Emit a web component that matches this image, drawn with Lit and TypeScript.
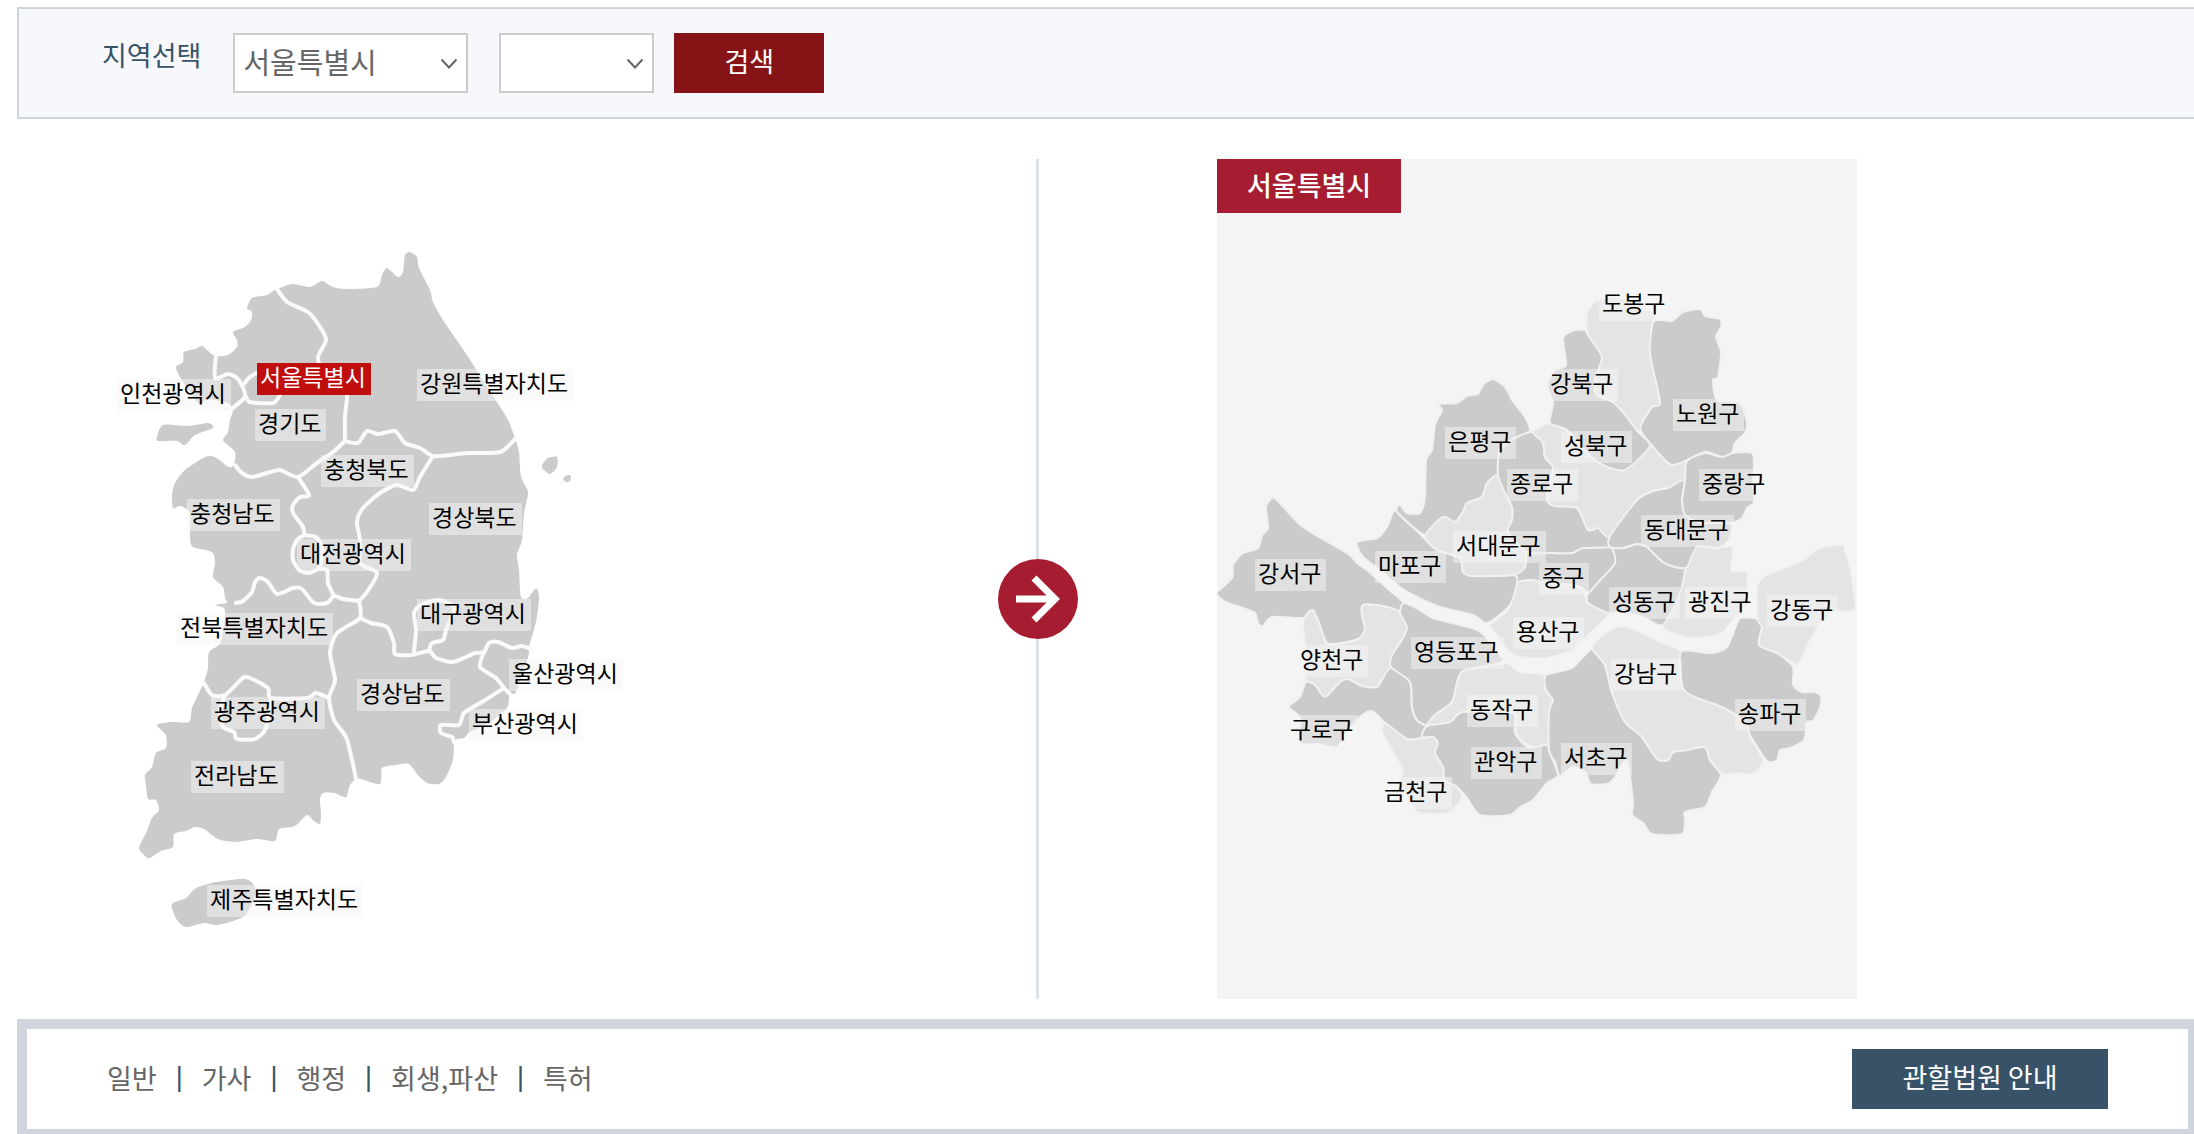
import { LitElement, html, svg, css } from "lit";
import { customElement, property } from "lit/decorators.js";

type Pin = { name: string; x: number; y: number; active?: boolean };
type Area = { tone: string; points: string };

const PROVINCES: Pin[] = [
  { name: "인천광역시", x: 117, y: 379 },
  { name: "서울특별시", x: 257, y: 363, active: true },
  { name: "강원특별자치도", x: 417, y: 369 },
  { name: "경기도", x: 255, y: 409 },
  { name: "충청북도", x: 321, y: 455 },
  { name: "충청남도", x: 187, y: 499 },
  { name: "경상북도", x: 429, y: 503 },
  { name: "대전광역시", x: 297, y: 539 },
  { name: "전북특별자치도", x: 177, y: 613 },
  { name: "대구광역시", x: 417, y: 599 },
  { name: "울산광역시", x: 509, y: 659 },
  { name: "경상남도", x: 357, y: 679 },
  { name: "부산광역시", x: 469, y: 709 },
  { name: "광주광역시", x: 211, y: 697 },
  { name: "전라남도", x: 191, y: 761 },
  { name: "제주특별자치도", x: 207, y: 885 },
];

const LAND: Area[] = [
  {
    tone: "dark",
    points:
      "405,255 410,252 417,257 419,268 430,290 433,302 443,320 467,355 487,387 497,402 508,420 515,438 519,452 521,477 528,492 524,513 522,540 517,555 519,570 521,597 528,598 534,590 537,589 539,597 537,617 533,633 529,647 528,658 516,692 511,693 509,698 507,708 489,723 470,732 464,738 457,739 454,743 453,760 446,777 439,784 427,783 418,775 409,764 396,765 382,768 380,784 361,779 356,779 350,785 346,797 334,793 323,793 320,800 321,813 320,824 314,821 307,815 295,826 279,829 275,841 257,839 236,842 218,839 204,829 195,827 186,831 174,834 173,847 161,851 150,858 145,856 139,848 146,833 152,818 159,810 156,800 148,799 146,785 145,775 152,767 156,753 166,748 166,735 157,725 171,722 189,722 192,708 198,695 204,682 208,668 209,652 221,642 225,610 215,605 227,603 225,598 223,587 213,577 215,563 212,552 193,547 190,537 190,513 180,506 173,508 172,495 175,483 185,470 205,457 215,457 227,466 232,467 235,460 235,452 228,445 223,440 228,432 230,420 233,410 228,403 207,399 200,405 190,392 180,377 176,367 183,362 184,352 195,349 202,346 207,350 215,356 228,355 237,347 237,340 233,332 245,327 251,320 252,312 247,308 252,298 267,295 275,290 292,284 310,287 322,281 333,287 347,289 377,287 382,275 387,268 398,277 403,272",
  },
  { tone: "dark", points: "157,437 163,425 187,426 208,423 213,428 195,435 185,445 177,441 158,441" },
  { tone: "dark", points: "542,465 548,458 557,457 557,467 550,474 543,469" },
  { tone: "dark", points: "563,479 567,475 571,476 570,481 566,482" },
  {
    tone: "dark",
    points:
      "172,908 173,903 186,898 196,888 216,882 245,879 255,887 253,902 243,917 218,925 204,923 186,927 177,920",
  },
];

const LAND_BORDERS = [
  "277,289 287,302 308,312 320,327 326,340 318,357 323,370 345,385 347,397 345,417 345,441",
  "216,355 215,378 228,374 237,378 243,388 245,397 233,408",
  "243,385 250,377 257,373 270,368",
  "245,395 250,402 273,403 280,395",
  "345,441 333,452 317,463 298,477 280,470 267,473 252,477 242,473 235,465",
  "345,441 358,443 367,431 378,434 395,431 405,443 420,448 433,456 450,455 467,453 500,452 515,439",
  "433,456 420,477 413,490 397,485 380,493 363,508 357,522 360,540 360,563 377,573 367,592 359,601",
  "298,477 309,495 300,497 293,505 293,513 303,527 304,535",
  "304,535 297,540 293,549 293,560 299,570 308,573 318,569 322,558 322,547 316,537 304,535",
  "318,569 327,570 328,583 334,596",
  "236,603 243,601 252,592 255,582 260,578 268,582 277,594 293,588 302,589 314,603 327,603 334,596 343,599 359,601",
  "359,601 360,618 337,633 330,653 335,680 329,698 334,720 346,737 352,760 356,779",
  "360,618 371,623 387,627 394,643 395,654 411,655 429,651 436,658 452,662 464,658 475,653 484,652 489,643 498,642 512,648 521,646 529,648",
  "414,652 416,630 414,613 421,605 439,600 454,608 446,630 443,640 432,643 429,651",
  "484,652 480,667 496,678 504,688 511,695",
  "504,688 482,702 464,713 459,725 441,725 441,733 452,737 454,742",
  "204,683 212,695 225,695 243,678 250,678 268,688 271,698 307,698 316,693 329,698",
  "225,695 220,710 223,727 234,732 237,739 255,739 266,728 271,698",
];

const DISTRICTS: Pin[] = [
  { name: "도봉구", x: 1599, y: 289 },
  { name: "강북구", x: 1547, y: 369 },
  { name: "노원구", x: 1673, y: 399 },
  { name: "성북구", x: 1561, y: 431 },
  { name: "은평구", x: 1445, y: 427 },
  { name: "종로구", x: 1507, y: 469 },
  { name: "중랑구", x: 1699, y: 469 },
  { name: "동대문구", x: 1641, y: 515 },
  { name: "서대문구", x: 1453, y: 531 },
  { name: "중구", x: 1539, y: 563 },
  { name: "마포구", x: 1375, y: 551 },
  { name: "강서구", x: 1255, y: 559 },
  { name: "성동구", x: 1609, y: 587 },
  { name: "광진구", x: 1685, y: 587 },
  { name: "강동구", x: 1767, y: 595 },
  { name: "용산구", x: 1513, y: 617 },
  { name: "영등포구", x: 1411, y: 637 },
  { name: "양천구", x: 1297, y: 645 },
  { name: "강남구", x: 1611, y: 659 },
  { name: "동작구", x: 1467, y: 695 },
  { name: "구로구", x: 1287, y: 715 },
  { name: "관악구", x: 1471, y: 747 },
  { name: "서초구", x: 1561, y: 743 },
  { name: "송파구", x: 1735, y: 699 },
  { name: "금천구", x: 1381, y: 777 },
];

const CITY: Area[] = [
  // 강서구
  { tone: "dark", points: "1272,498 1277,500 1303,527 1347,553 1357,563 1367,570 1387,588 1404,603 1400,612 1382,606 1363,605 1362,615 1365,628 1360,638 1342,643 1327,643 1320,627 1313,610 1303,618 1272,617 1263,626 1258,623 1255,613 1243,608 1225,602 1217,595 1217,592 1232,578 1233,565 1243,553 1258,548 1262,535 1268,528 1266,507" },
  // 양천구
  { tone: "light", points: "1312,610 1320,625 1327,644 1343,643 1360,638 1365,628 1362,615 1363,605 1382,606 1400,612 1407,628 1400,643 1392,655 1391,667 1383,678 1377,687 1362,686 1348,679 1340,682 1325,697 1315,685 1306,680 1306,650 1303,622" },
  // 구로구
  { tone: "dark", points: "1306,682 1315,685 1325,697 1340,682 1348,679 1362,686 1377,687 1383,678 1391,668 1410,682 1412,707 1417,720 1427,727 1422,739 1407,739 1385,723 1372,711 1360,717 1345,735 1337,747 1317,744 1300,743 1300,718 1289,707 1300,697" },
  // 금천구
  { tone: "light", points: "1385,723 1407,739 1422,738 1433,737 1438,743 1435,753 1443,767 1445,780 1457,787 1462,797 1448,813 1420,813 1413,807 1400,780 1403,770 1390,747 1382,732" },
  // 영등포구
  { tone: "dark", points: "1404,603 1420,610 1433,618 1477,630 1490,642 1503,660 1490,667 1463,671 1457,683 1452,702 1435,715 1427,725 1417,720 1412,707 1410,682 1391,667 1392,655 1400,643 1407,628 1400,613" },
  // 동작구
  { tone: "light", points: "1463,671 1493,665 1507,663 1520,672 1546,675 1546,690 1553,700 1549,712 1549,745 1530,746 1517,735 1515,720 1513,713 1463,712 1450,722 1427,726 1435,715 1452,702 1457,683" },
  // 관악구
  { tone: "dark", points: "1427,726 1450,722 1463,712 1513,713 1515,733 1528,747 1547,745 1550,753 1558,775 1547,783 1533,800 1520,807 1510,815 1480,815 1467,798 1457,787 1445,780 1443,767 1435,753 1438,743 1433,737 1422,737" },
  // 서초구
  { tone: "dark", points: "1546,675 1572,668 1592,649 1605,665 1612,693 1625,722 1642,737 1657,759 1668,760 1673,752 1687,750 1705,747 1710,760 1721,775 1712,792 1705,807 1685,812 1685,820 1682,834 1652,834 1643,823 1632,815 1633,803 1628,763 1623,763 1615,777 1607,784 1591,784 1585,772 1573,767 1560,776 1555,762 1549,750 1549,712 1553,700 1546,690" },
  // 강남구
  { tone: "light", points: "1592,648 1603,635 1617,627 1630,628 1660,642 1681,652 1683,688 1697,698 1717,705 1733,713 1747,725 1750,737 1763,760 1753,774 1738,773 1723,774 1710,760 1705,747 1687,750 1673,752 1668,760 1657,759 1642,737 1625,722 1612,693 1605,665" },
  // 송파구
  { tone: "dark", points: "1681,652 1710,653 1727,647 1740,618 1757,619 1762,627 1759,645 1777,653 1793,667 1793,685 1802,692 1815,692 1821,697 1820,708 1813,721 1807,722 1804,740 1790,748 1780,750 1777,760 1767,761 1750,735 1747,725 1733,713 1717,705 1697,698 1683,688" },
  // 강동구
  { tone: "light", points: "1843,545 1845,552 1850,567 1854,593 1855,610 1832,612 1820,625 1810,640 1800,662 1795,664 1777,653 1759,645 1762,627 1758,620 1757,587 1767,575 1800,562 1820,548" },
  // 광진구
  { tone: "light", points: "1697,547 1717,548 1733,547 1731,570 1747,572 1747,593 1743,613 1733,620 1723,632 1707,637 1687,637 1663,627 1678,597 1685,567" },
  // 성동구
  { tone: "dark", points: "1610,546 1623,548 1637,544 1647,547 1663,562 1675,567 1685,567 1680,593 1663,625 1643,617 1623,612 1607,613 1588,604 1588,593 1600,580 1615,563" },
  // 중구
  { tone: "dark", points: "1527,552 1550,553 1572,553 1583,548 1610,547 1615,563 1600,580 1588,593 1580,587 1543,582 1530,580 1518,582 1515,575 1525,567" },
  // 용산구
  { tone: "light", points: "1530,580 1543,582 1580,587 1588,603 1607,613 1607,617 1590,633 1573,650 1547,658 1520,657 1507,650 1495,633 1490,625 1508,610 1515,588 1518,582" },
  // 마포구
  { tone: "dark", points: "1357,542 1377,538 1387,527 1393,512 1397,512 1423,537 1437,550 1460,558 1463,572 1473,576 1513,575 1517,583 1510,605 1493,620 1485,623 1473,615 1440,607 1417,597 1400,587 1380,570 1363,557" },
  // 은평구
  { tone: "dark", points: "1438,404 1457,403 1467,396 1478,394 1483,385 1493,379 1505,387 1512,400 1525,417 1530,431 1517,437 1500,450 1498,475 1487,483 1482,497 1467,503 1463,512 1455,522 1443,517 1425,535 1397,512 1400,505 1407,513 1420,513 1425,497 1426,460 1432,450 1435,425 1442,410" },
  // 서대문구
  { tone: "light", points: "1498,475 1505,493 1512,507 1512,520 1508,532 1525,550 1525,567 1513,575 1473,576 1463,572 1460,558 1437,550 1425,536 1443,517 1455,522 1463,512 1467,503 1482,497 1487,483" },
  // 종로구
  { tone: "dark", points: "1533,432 1543,443 1545,457 1553,467 1550,483 1547,500 1555,506 1577,508 1588,530 1598,528 1610,537 1610,547 1583,548 1572,553 1550,553 1527,552 1508,532 1512,520 1512,507 1505,493 1498,475 1500,450 1517,437" },
  // 성북구
  { tone: "light", points: "1533,432 1550,423 1567,430 1587,453 1603,465 1625,470 1650,446 1668,463 1687,461 1685,480 1668,488 1653,491 1637,500 1610,536 1598,528 1588,530 1577,508 1555,506 1547,500 1550,483 1553,467 1545,457 1543,443" },
  // 강북구
  { tone: "dark", points: "1563,338 1572,331 1585,330 1590,338 1602,357 1595,380 1597,395 1613,402 1627,417 1638,432 1650,446 1625,470 1603,465 1587,453 1567,430 1550,423 1553,403 1547,385 1555,370 1566,365" },
  // 도봉구
  { tone: "light", points: "1587,332 1587,313 1597,300 1617,297 1653,313 1653,322 1650,353 1660,402 1652,407 1642,423 1639,432 1627,417 1613,402 1597,395 1595,380 1602,357 1590,338" },
  // 노원구
  { tone: "dark", points: "1654,321 1672,321 1683,312 1700,309 1705,316 1720,319 1721,327 1716,337 1721,352 1718,377 1713,380 1717,400 1740,403 1747,423 1745,433 1735,443 1732,453 1722,457 1705,452 1680,463 1668,463 1642,433 1642,423 1652,407 1660,402 1650,353" },
  // 중랑구
  { tone: "dark", points: "1687,461 1705,453 1722,457 1733,453 1752,453 1754,467 1753,485 1754,502 1747,508 1742,518 1730,523 1700,523 1685,515 1682,500 1685,480" },
  // 동대문구
  { tone: "dark", points: "1684,480 1668,488 1653,491 1637,500 1610,536 1610,547 1623,548 1637,544 1647,547 1663,562 1675,567 1687,567 1697,547 1717,548 1727,543 1731,533 1730,523 1700,523 1685,515 1682,500" },
];

/** Turns a point list into a softly rounded curve that passes through every point. */
function curve(list: string, closed: boolean): string {
  const pts = list.split(" ").map((p) => p.split(",").map(Number));
  const n = pts.length;
  const at = (i: number) =>
    closed ? pts[(i + n) % n] : pts[Math.max(0, Math.min(n - 1, i))];
  const pull = 0.12;
  let d = `M${pts[0][0]} ${pts[0][1]}`;
  for (let i = 0; i < (closed ? n : n - 1); i++) {
    const [a, b, c, e] = [at(i - 1), at(i), at(i + 1), at(i + 2)];
    const x1 = b[0] + (c[0] - a[0]) * pull;
    const y1 = b[1] + (c[1] - a[1]) * pull;
    const x2 = c[0] - (e[0] - b[0]) * pull;
    const y2 = c[1] - (e[1] - b[1]) * pull;
    d += `C${x1.toFixed(1)} ${y1.toFixed(1)} ${x2.toFixed(1)} ${y2.toFixed(1)} ${c[0]} ${c[1]}`;
  }
  return closed ? d + "Z" : d;
}

@customElement("region-map")
class RegionMap extends LitElement {
  @property({ attribute: false }) areas: Area[] = [];
  @property({ attribute: false }) borders: string[] = [];
  @property({ attribute: false }) pins: Pin[] = [];
  @property({ attribute: false }) origin: [number, number] = [0, 0];
  @property() label = "";

  static styles = css`
    :host {
      display: block;
      position: relative;
      width: 640px;
    }
    svg {
      display: block;
      width: 100%;
    }
    .area {
      stroke-linejoin: round;
      stroke-width: 2;
    }
    .dark {
      fill: #cbcbcb;
    }
    .light {
      fill: #e4e4e4;
    }
    .split {
      stroke: #f1f1f1;
    }
    .border {
      fill: none;
      stroke: #fafafa;
      stroke-width: 4;
      stroke-linejoin: round;
      stroke-linecap: round;
    }
    .pin {
      position: absolute;
      box-sizing: border-box;
      height: 32px;
      padding: 0 5px 0 3px;
      font-size: 23px;
      line-height: 26px;
      white-space: nowrap;
      text-decoration: none;
      color: #000;
      background: rgba(245, 245, 245, 0.5);
    }
    .active {
      color: #fff;
      background: #c00d0d;
    }
  `;

  render() {
    const [ox, oy] = this.origin;
    const split = this.borders.length ? "" : "split";
    return html`
      <svg viewBox="${ox} ${oy} 640 840" role="img" aria-label=${this.label}>
        ${this.areas.map(
          (a) => svg`<path class="area ${a.tone} ${split}" d=${curve(a.points, true)}></path>`
        )}
        ${this.borders.map((b) => svg`<path class="border" d=${curve(b, false)}></path>`)}
      </svg>
      ${this.pins.map(
        (p) => html`<a
          class="pin ${p.active ? "active" : ""}"
          href="#"
          style="left:${p.x - ox}px;top:${p.y - oy}px"
          >${p.name}</a
        >`
      )}
    `;
  }
}

@customElement("app-root")
class AppRoot extends LitElement {
  static styles = css`
    :host {
      display: block;
      padding: 7px 0 0 17px;
      background: #fff;
      color: #666;
      font-family: "Noto Sans CJK KR", sans-serif;
      font-size: 27px;
    }
    .search {
      display: flex;
      align-items: flex-start;
      padding: 24px 83px;
      border: 2px solid #d0d4dc;
      border-right: 0;
      background: #f7f8fc;
    }
    .search-label {
      margin-right: 32px;
      line-height: 44px;
      color: #385368;
    }
    .field {
      position: relative;
      margin-right: 31px;
    }
    .field + button {
      margin-left: -11px;
    }
    select {
      display: block;
      box-sizing: border-box;
      height: 60px;
      padding: 0 40px 4px 8px;
      border: 2px solid #ccc;
      border-radius: 0;
      appearance: none;
      background: #fff;
      color: #666;
      font-family: inherit;
      font-size: 29px;
    }
    .province {
      width: 235px;
    }
    .district {
      width: 155px;
    }
    .chevron {
      position: absolute;
      right: 10px;
      top: 25px;
      width: 18px;
      height: 12px;
      pointer-events: none;
    }
    button {
      height: 60px;
      padding: 0 50px 5px;
      border: 0;
      color: #fff;
      font-family: inherit;
      font-size: 27px;
      white-space: nowrap;
    }
    .go {
      min-width: 150px;
      background: #861416;
    }
    .guide {
      min-width: 256px;
      background: #385368;
    }
    .maps {
      display: grid;
      grid-template-columns: 981fr 80px 139fr 640px 337fr;
      padding: 40px 0 20px;
    }
    .divider {
      display: flex;
      flex-direction: column;
      align-items: center;
    }
    .line {
      flex: 10 0 0;
      width: 3px;
      margin-right: 2px;
      background: #dde1e6;
    }
    .line-end {
      flex-grow: 9;
    }
    .arrow {
      width: 80px;
      height: 80px;
    }
    .city {
      grid-column: 4;
      position: relative;
      background: #f4f4f4;
    }
    .city-name {
      position: absolute;
      left: 0;
      top: 0;
      z-index: 1;
      margin: 0;
      padding: 0 30px 2px;
      background: #a61c30;
      color: #fff;
      font-size: 27px;
      font-weight: 500;
      line-height: 52px;
    }
    .courts {
      display: flex;
      align-items: center;
      justify-content: space-between;
      padding: 20px 80px;
      border: solid #d0d4dc;
      border-width: 10px 6px 5px 10px;
    }
    .kinds {
      display: flex;
      align-items: center;
      gap: 19px;
      padding-bottom: 4px;
    }
    .kinds a {
      color: #666;
      text-decoration: none;
    }
    .bar {
      font-family: "Liberation Sans", sans-serif;
      color: #385368;
    }
  `;

  private chevron() {
    return html`<svg class="chevron" viewBox="0 0 18 12" aria-hidden="true">
      <path d="M1.5 1.5L9 9.5L16.5 1.5" fill="none" stroke="#666" stroke-width="2"></path>
    </svg>`;
  }

  render() {
    const kinds = ["일반", "가사", "행정", "회생,파산", "특허"];
    return html`
      <form class="search" @submit=${(e: Event) => e.preventDefault()}>
        <label class="search-label" for="province">지역선택</label>
        <div class="field">
          <select id="province" class="province">
            <option>서울특별시</option>
          </select>
          ${this.chevron()}
        </div>
        <div class="field">
          <select class="district" aria-label="시군구">
            <option></option>
          </select>
          ${this.chevron()}
        </div>
        <button class="go" type="submit">검색</button>
      </form>
      <main class="maps">
        <region-map
          label="전국 지도"
          .origin=${[17, 159]}
          .areas=${LAND}
          .borders=${LAND_BORDERS}
          .pins=${PROVINCES}
        ></region-map>
        <div class="divider">
          <div class="line"></div>
          <svg class="arrow" viewBox="0 0 80 80" aria-hidden="true">
            <circle cx="40" cy="40" r="40" fill="#a61c30"></circle>
            <path d="M18 40H56M36 19L57 40L36 61" fill="none" stroke="#fff" stroke-width="7"></path>
          </svg>
          <div class="line line-end"></div>
        </div>
        <section class="city">
          <h2 class="city-name">서울특별시</h2>
          <region-map
            label="서울특별시 지도"
            .origin=${[1217, 159]}
            .areas=${CITY}
            .pins=${DISTRICTS}
          ></region-map>
        </section>
      </main>
      <footer class="courts">
        <nav class="kinds">
          ${kinds.map(
            (k, i) => html`${i ? html`<span class="bar">|</span>` : ""}<a href="#">${k}</a>`
          )}
        </nav>
        <button class="guide" type="button">관할법원 안내</button>
      </footer>
    `;
  }
}
